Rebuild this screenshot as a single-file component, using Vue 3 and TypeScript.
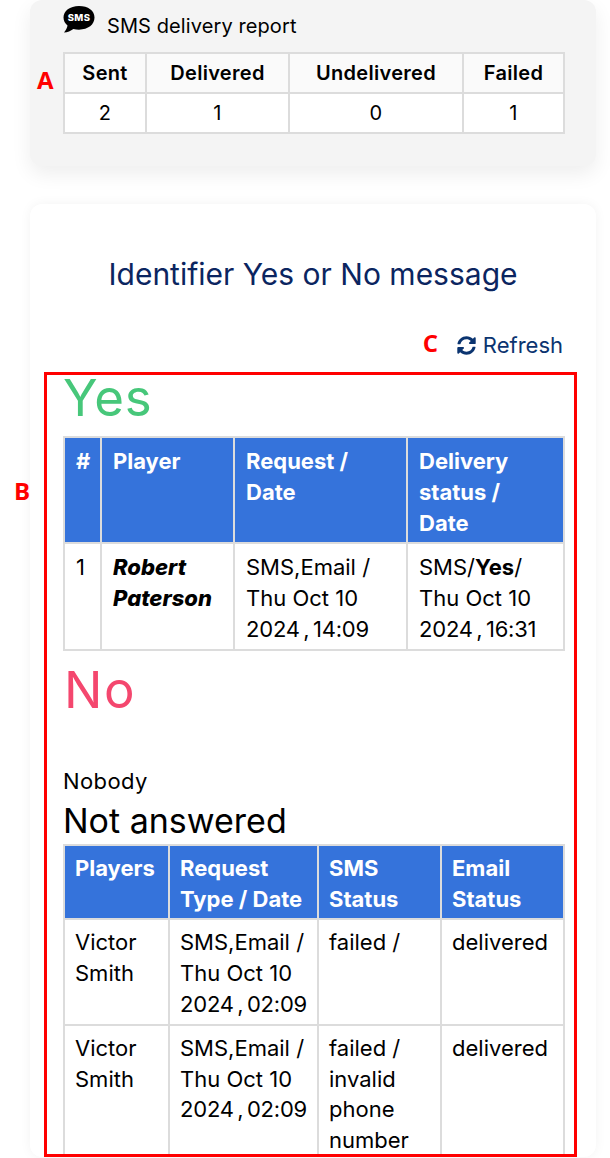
<template>
  <div class="page">
    <section class="card card-grey">
      <div class="report-title">
        <svg class="sms-icon" viewBox="0 0 34 30" width="34" height="30">
          <path d="M17 1C7.800 1 1.500 6 1.500 12.600c0 3.200 1.500 6 4 8-.3 2.400-1.600 4.800-3.500 6.900 3.500-.2 6.800-1.500 9.400-3.500 1.800.5 3.600.7 5.600.7 9.200 0 15.500-5.100 15.500-12.100S26.200 1 17 1z" fill="#000" />
          <text x="17" y="16" class="sms-text" text-anchor="middle">SMS</text>
        </svg>
        <span>SMS delivery report</span>
      </div>
      <div class="note note-a">A</div>
      <table class="report">
        <colgroup>
          <col style="width: 82px" />
          <col style="width: 143px" />
          <col style="width: 174px" />
          <col style="width: 101px" />
        </colgroup>
        <thead>
          <tr><th v-for="h in reportHead" :key="h">{{ h }}</th></tr>
        </thead>
        <tbody>
          <tr><td v-for="(v, i) in reportRow" :key="i">{{ v }}</td></tr>
        </tbody>
      </table>
    </section>

    <section class="card card-white">
      <h2 class="heading">Identifier Yes or No message</h2>
      <div class="refresh-row">
        <span class="note note-c">C</span>
        <a class="refresh">
          <svg viewBox="0 0 512 512" width="19" height="19">
            <path fill="#0b3470" d="M370.720 133.280C339.458 104.008 298.888 87.962 255.848 88c-77.458.068-144.328 53.178-162.791 126.850-1.344 5.363-6.122 9.150-11.651 9.150H24.103c-7.498 0-13.194-6.807-11.807-14.176C33.933 94.924 134.813 8 256 8c66.448 0 126.791 26.136 171.315 68.685L463.030 40.970C478.149 25.851 504 36.559 504 57.941V192c0 13.255-10.745 24-24 24H345.941c-21.382 0-32.090-25.851-16.971-40.971l41.750-41.749zM32 296h134.059c21.382 0 32.090 25.851 16.971 40.971l-41.750 41.750c31.262 29.273 71.835 45.319 114.876 45.280 77.418-.070 144.315-53.144 162.787-126.849 1.344-5.363 6.122-9.150 11.651-9.150h57.304c7.498 0 13.194 6.807 11.807 14.176C478.067 417.076 377.187 504 256 504c-66.448 0-126.791-26.136-171.315-68.685L48.970 471.030C33.851 486.149 8 475.441 8 454.059V320c0-13.255 10.745-24 24-24z" />
          </svg>
          Refresh
        </a>
      </div>

      <div class="frame">
        <div class="note note-b">B</div>
        <div class="frame-body">
          <div class="answer yes">Yes</div>
          <table class="grid">
            <colgroup>
              <col style="width: 37px" />
              <col style="width: 133px" />
              <col style="width: 173px" />
              <col style="width: 157px" />
            </colgroup>
            <thead>
              <tr>
                <th>#</th>
                <th>Player</th>
                <th>Request /<br />Date</th>
                <th>Delivery<br />status /<br />Date</th>
              </tr>
            </thead>
            <tbody>
              <tr>
                <td>1</td>
                <td class="player"><b><i>Robert Paterson</i></b></td>
                <td>SMS,Email /<br />Thu Oct 10<br /><span class="nowrap">2024 , 14:09</span></td>
                <td>SMS/<b>Yes</b>/<br />Thu Oct 10<br /><span class="nowrap">2024 , 16:31</span></td>
              </tr>
            </tbody>
          </table>

          <div class="answer no">No</div>
          <p class="nobody">Nobody</p>
          <h3 class="not-answered">Not answered</h3>
          <table class="grid grid-missing">
            <colgroup>
              <col style="width: 105px" />
              <col style="width: 149px" />
              <col style="width: 123px" />
              <col style="width: 123px" />
            </colgroup>
            <thead>
              <tr>
                <th>Players</th>
                <th>Request<br />Type / Date</th>
                <th>SMS<br />Status</th>
                <th>Email<br />Status</th>
              </tr>
            </thead>
            <tbody>
              <tr v-for="(row, i) in missing" :key="i">
                <td>{{ row.player }}</td>
                <td>{{ row.type }} /<br />{{ row.day }}<br /><span class="nowrap">{{ row.time }}</span></td>
                <td>{{ row.sms }}</td>
                <td>{{ row.email }}</td>
              </tr>
            </tbody>
          </table>
        </div>
      </div>
    </section>
  </div>
</template>

<script setup lang="ts">
interface MissingRow {
  player: string
  type: string
  day: string
  time: string
  sms: string
  email: string
}

const reportHead: string[] = ['Sent', 'Delivered', 'Undelivered', 'Failed']
const reportRow: number[] = [2, 1, 0, 1]

const missing: MissingRow[] = [
  { player: 'Victor Smith', type: 'SMS,Email', day: 'Thu Oct 10', time: '2024 , 02:09', sms: 'failed /', email: 'delivered' },
  { player: 'Victor Smith', type: 'SMS,Email', day: 'Thu Oct 10', time: '2024 , 02:09', sms: 'failed / invalid phone number', email: 'delivered' }
]
</script>

<style>
html,
body {
  margin: 0;
  background: #fff;
}
</style>

<style scoped>
.page {
  height: 1158px;
  overflow: hidden;
  box-sizing: border-box;
  padding: 0 14px 0 30px;
  font-family: Inter, "Open Sans", sans-serif;
  color: #000;
}

.card {
  border-radius: 12px;
  box-sizing: border-box;
  padding: 0 33px;
}

.card-grey {
  position: relative;
  height: 166px;
  background: #f4f4f4;
  box-shadow: 0 8px 20px rgba(0, 0, 0, 0.07);
}

.card-white {
  margin-top: 38px;
  background: #fff;
  box-shadow: 0 0 12px rgba(0, 0, 0, 0.05);
  padding-top: 52px;
}

.report-title {
  display: flex;
  align-items: center;
  gap: 11px;
  height: 52px;
  font-size: 20px;
  letter-spacing: 0.1px;
}

.sms-icon {
  margin: 0 0 12px -1px;
}

.sms-text {
  font: 800 9.5px Inter, sans-serif;
  letter-spacing: 0.4px;
  fill: #fff;
}

table {
  width: 500px;
  border-collapse: collapse;
  table-layout: fixed;
  border: 2px solid #dcdcdc;
}

th,
td {
  border: 2px solid #dcdcdc;
}

.report {
  background: #fff;
  font-size: 20px;
  letter-spacing: 0.3px;
}

.report th {
  height: 38px;
  background: #fafafa;
  font-weight: 600;
  padding: 0;
}

.report td {
  height: 38px;
  text-align: center;
  padding: 0;
}

.heading {
  margin: 0;
  text-align: center;
  font-size: 30px;
  line-height: 36px;
  font-weight: 400;
  color: #0b2560;
}

.refresh-row {
  position: relative;
  display: flex;
  justify-content: flex-end;
  align-items: center;
  margin-top: 37px;
  height: 32px;
}

.refresh {
  display: flex;
  align-items: center;
  gap: 7px;
  font-size: 22px;
  color: #0b3470;
}

.note {
  position: absolute;
  font-family: "Open Sans", sans-serif;
  font-size: 24px;
  font-weight: 700;
  letter-spacing: 0;
  color: #f00;
}

.note-a {
  left: 7px;
  top: 63px;
}

.note-b {
  left: -33px;
  top: 99px;
}

.note-c {
  right: 125px;
  top: -3px;
}

.frame {
  position: relative;
  margin: 11px -14px 0 -19px;
  border: 3px solid #f00;
  height: 785px;
  box-sizing: border-box;
}

.frame-body {
  height: 100%;
  padding-left: 16px;
  clip-path: inset(-20px 0 0 0);
}

.answer {
  font-size: 51px;
  line-height: 46px;
  letter-spacing: 0.6px;
}

.yes {
  color: #47c77a;
  margin-bottom: 15px;
}

.no {
  color: #f4476e;
  margin: 16px 0 0 1px;
  letter-spacing: 1.500px;
}

.nobody {
  margin: 53px 0 0;
  font-size: 22px;
  line-height: 30px;
  letter-spacing: 0.4px;
}

.not-answered {
  margin: 3px 0 1px;
  font-size: 34px;
  line-height: 44px;
  font-weight: 400;
}

.grid {
  font-size: 22px;
  line-height: 30.8px;
}

.grid th {
  background: #3573db;
  color: #fff;
  text-align: left;
  vertical-align: top;
  padding: 8px 10px 4px 11px;
  font-weight: 700;
}

.grid td {
  vertical-align: top;
  padding: 8px 10px 4px 11px;
}

.grid-missing th,
.grid-missing td {
  padding: 7px 10px 4px;
}

.nowrap {
  white-space: nowrap;
  word-spacing: -2.500px;
  letter-spacing: -0.2px;
}

.player b {
  font-weight: 800;
}
</style>
